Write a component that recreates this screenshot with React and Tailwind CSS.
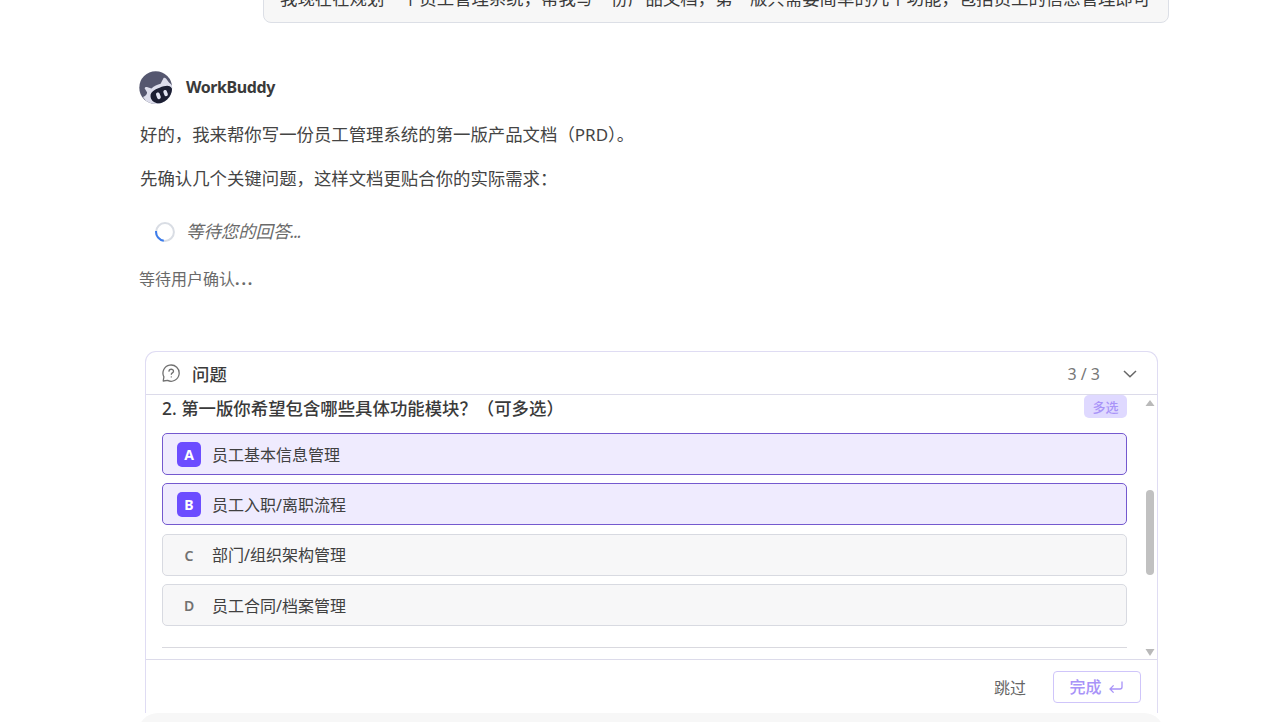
import React from "react";

const FONT =
  "font-['Noto_Sans','Noto_Sans_CJK_SC',sans-serif] [text-spacing-trim:space-all]";

const options = [
  { key: "A", label: "员工基本信息管理", checked: true },
  { key: "B", label: "员工入职/离职流程", checked: true },
  { key: "C", label: "部门/组织架构管理", checked: false },
  { key: "D", label: "员工合同/档案管理", checked: false },
];

const Avatar = () => (
  <svg width="34" height="34" viewBox="0 0 34 34" className="shrink-0">
    <defs>
      <clipPath id="avatar">
        <circle cx="16.7" cy="16.7" r="16.4" />
      </clipPath>
    </defs>
    <g clipPath="url(#avatar)">
      <rect width="34" height="34" fill="#55576f" />
      <path
        d="M5.6 17.2 C6 16 7.4 15.6 8.6 16.2 L12.5 17.6 C15 15.2 18.4 13.4 21.6 12.8 L24.4 7.2 C25.2 6.2 26.4 6.8 27.2 7.8 L30 11.4 L34 15 V34 H10 L4 26 C6.4 25 8.4 23.4 8 21.2 Z"
        fill="#dcddeb"
      />
      <path
        d="M11.6 26 C11 21.5 14.6 19 20.6 16.8 C26.5 14.4 30.5 14 32.6 17 C36 22.5 31.5 28.5 25.5 31 C18.5 34 12.6 31.5 11.6 26 Z"
        fill="#1c1f33"
      />
      <rect x="17.5" y="21.4" width="3.8" height="6.8" rx="1.9" transform="rotate(-20 19.4 24.8)" fill="#e2e4f2" />
      <rect x="24.8" y="18.9" width="3.6" height="6.4" rx="1.8" transform="rotate(-20 26.6 22.1)" fill="#e2e4f2" />
    </g>
  </svg>
);

const Spinner = () => (
  <svg width="20" height="20" viewBox="0 0 20 20" fill="none" className="shrink-0">
    <circle cx="10" cy="10" r="8.9" stroke="#d9dde4" strokeWidth="2" />
    <path d="M1.1 9 A8.9 8.9 0 0 0 8.8 18.8" stroke="#3b7cec" strokeWidth="2" />
  </svg>
);

const QuestionIcon = () => (
  <svg
    width="18"
    height="18"
    viewBox="0 0 18 18"
    fill="none"
    stroke="#717171"
    strokeWidth="1.3"
    strokeLinecap="round"
    strokeLinejoin="round"
    className="shrink-0"
  >
    <path d="M1.2 17 L1.9 12.9 A8.1 8.1 0 1 1 5.5 16.4 Z" />
    <path d="M7 7.2 C7.1 4.6 11.5 4.6 11.5 7.2 C11.5 8.8 9.3 8.9 9.3 10.3" />
    <path d="M9.3 12.8 V12.9" />
  </svg>
);

const Option = ({ item }) => (
  <div
    className={
      item.checked
        ? "flex h-[42px] items-center rounded-[5px] border border-[#7459cf] bg-[#efebfe] pl-[14px]"
        : "flex h-[42px] items-center rounded-[5px] border border-[#d8dae1] bg-[#f7f7f8] pl-[14px]"
    }
  >
    <span
      className={
        item.checked
          ? "flex h-[25px] w-6 items-center justify-center rounded-[5px] bg-[#6c4dff] pt-px text-[14px] font-bold text-white"
          : "flex h-[25px] w-6 items-center justify-center pt-px text-[14px] font-semibold text-[#717171]"
      }
    >
      {item.key}
    </span>
    <span className="ml-[11px] pt-px text-[16px] text-[#404040]">{item.label}</span>
  </div>
);

const QuestionCard = () => (
  <div className="ml-[145px] flex h-[362px] w-[1013px] shrink-0 flex-col rounded-t-[11px] border border-b-0 border-[#dfdcf3] bg-white">
    {/* Header */}
    <div className="flex h-[43px] shrink-0 items-center border-b border-[#dcdbea] pr-5 pl-4">
      <QuestionIcon />
      <span className="ml-3 pt-[2px] text-[17.4px] font-medium text-[#3a3a3a]">问题</span>
      <span className="ml-auto pt-[2px] text-[16px] text-[#777]">3 / 3</span>
      <svg width="14" height="8" viewBox="0 0 14 8" fill="none" stroke="#666" strokeWidth="1.5" className="mt-px ml-[23px]">
        <path d="M1 1 L7 6.8 L13 1" />
      </svg>
    </div>

    {/* Scroll area */}
    <div className="flex h-[264px] shrink-0 overflow-hidden pl-4">
      <div className="w-[965px]">
        <div className="flex h-[38px] items-start justify-between">
          <p className="text-[17.4px] leading-[26px] font-medium text-[#3a3a3a]">
            2. 第一版你希望包含哪些具体功能模块？（可多选）
          </p>
          <span className="flex h-[23px] w-[43px] items-center justify-center rounded-[5px] bg-[#dfd9ff] pt-[2px] text-[13px] font-medium text-[#a893f8]">
            多选
          </span>
        </div>
        <div className="flex flex-col gap-[8.4px]">
          {options.map((item) => (
            <Option key={item.key} item={item} />
          ))}
        </div>
        <div className="mt-[21px] h-px bg-[#d9d9df]"></div>
      </div>

      {/* Scrollbar */}
      <div className="ml-[18px] flex w-[10px] flex-col items-center pt-[5px] pb-[3px]">
        <svg width="10" height="6" viewBox="0 0 10 6">
          <path d="M5 0 L9.5 6 H0.5 Z" fill="#b9b9b9" />
        </svg>
        <div className="mt-[84px] h-[85px] w-2 rounded-full bg-[#c1c1c1]"></div>
        <svg width="10" height="7" viewBox="0 0 10 7" className="mt-auto">
          <path d="M0.5 0 H9.5 L5 7 Z" fill="#b9b9b9" />
        </svg>
      </div>
    </div>

    {/* Footer */}
    <div className="flex flex-1 items-center justify-end border-t border-[#dcdbea] pr-4">
      <button className="pt-[2px] text-[16px] text-[#666]">跳过</button>
      <button className="mt-px ml-[27px] flex h-[32px] w-[88px] items-center justify-center gap-[7px] rounded-[4px] border border-[#cfc5fa] pr-[2px] text-[16px] font-medium text-[#a893f8]">
        完成
        <svg width="14" height="12" viewBox="0 0 14 12" fill="none" stroke="#a893f8" strokeWidth="1.3">
          <path d="M13 0.5 V6 Q13 8 11 8 H1.2 M4.6 4.4 L1 8 L4.6 11.6" />
        </svg>
      </button>
    </div>
  </div>
);

const App = () => {
  return (
    <div className={`flex h-[722px] w-[1280px] flex-col overflow-hidden bg-white ${FONT}`}>
      {/* User message */}
      <div className="flex h-[23px] shrink-0 items-end overflow-hidden pl-[263px]">
        <div className="flex h-[60px] w-[906px] shrink-0 items-end rounded-[8px] border border-[#dcdfe6] bg-[#f7f7f7] pb-[10px] pl-4">
          <p className="text-[17.42px] leading-[28px] whitespace-nowrap text-[#3a3a3a]">
            我现在在规划一个员工管理系统，帮我写一份产品文档，第一版只需要简单的几个功能，包括员工的信息管理即可
          </p>
        </div>
      </div>

      {/* Assistant reply */}
      <div className="h-[328px] shrink-0 pt-[48px] pl-[139px] text-[#444]">
        <div className="flex h-[34px] items-center gap-[13px]">
          <Avatar />
          <span className="pb-[2px] text-[16px] font-bold tracking-[-0.4px] text-[#3a3a3a]">WorkBuddy</span>
        </div>
        <p className="mt-[14px] pl-px text-[17.4px] leading-[30px]">
          好的，我来帮你写一份员工管理系统的第一版产品文档（<span className="text-[17px]">PRD</span>
          <span className="[font-feature-settings:'halt']">）</span>。
        </p>
        <p className="mt-[13px] pl-px text-[17.4px] leading-[30px]">
          先确认几个关键问题，这样文档更贴合你的实际需求：
        </p>
        <div className="mt-[24px] flex h-[30px] items-center gap-[11px] pl-4">
          <Spinner />
          <span className="pb-[2px] text-[17.4px] text-[#6a6a6a] italic">
            等待您的回答<span className="tracking-[-0.9px]">...</span>
          </span>
        </div>
        <p className="mt-[17px] text-[16px] leading-[30px] text-[#6a6a6a]">
          等待用户确认<span className="font-bold tracking-[1.9px]">...</span>
        </p>
      </div>

      <QuestionCard />

      {/* Composer top edge */}
      <div className="ml-[138px] h-[9px] w-[1026px] shrink-0 overflow-hidden">
        <div className="h-[60px] rounded-[20px] bg-[#f7f7f7]"></div>
      </div>
    </div>
  );
};

export default App;
